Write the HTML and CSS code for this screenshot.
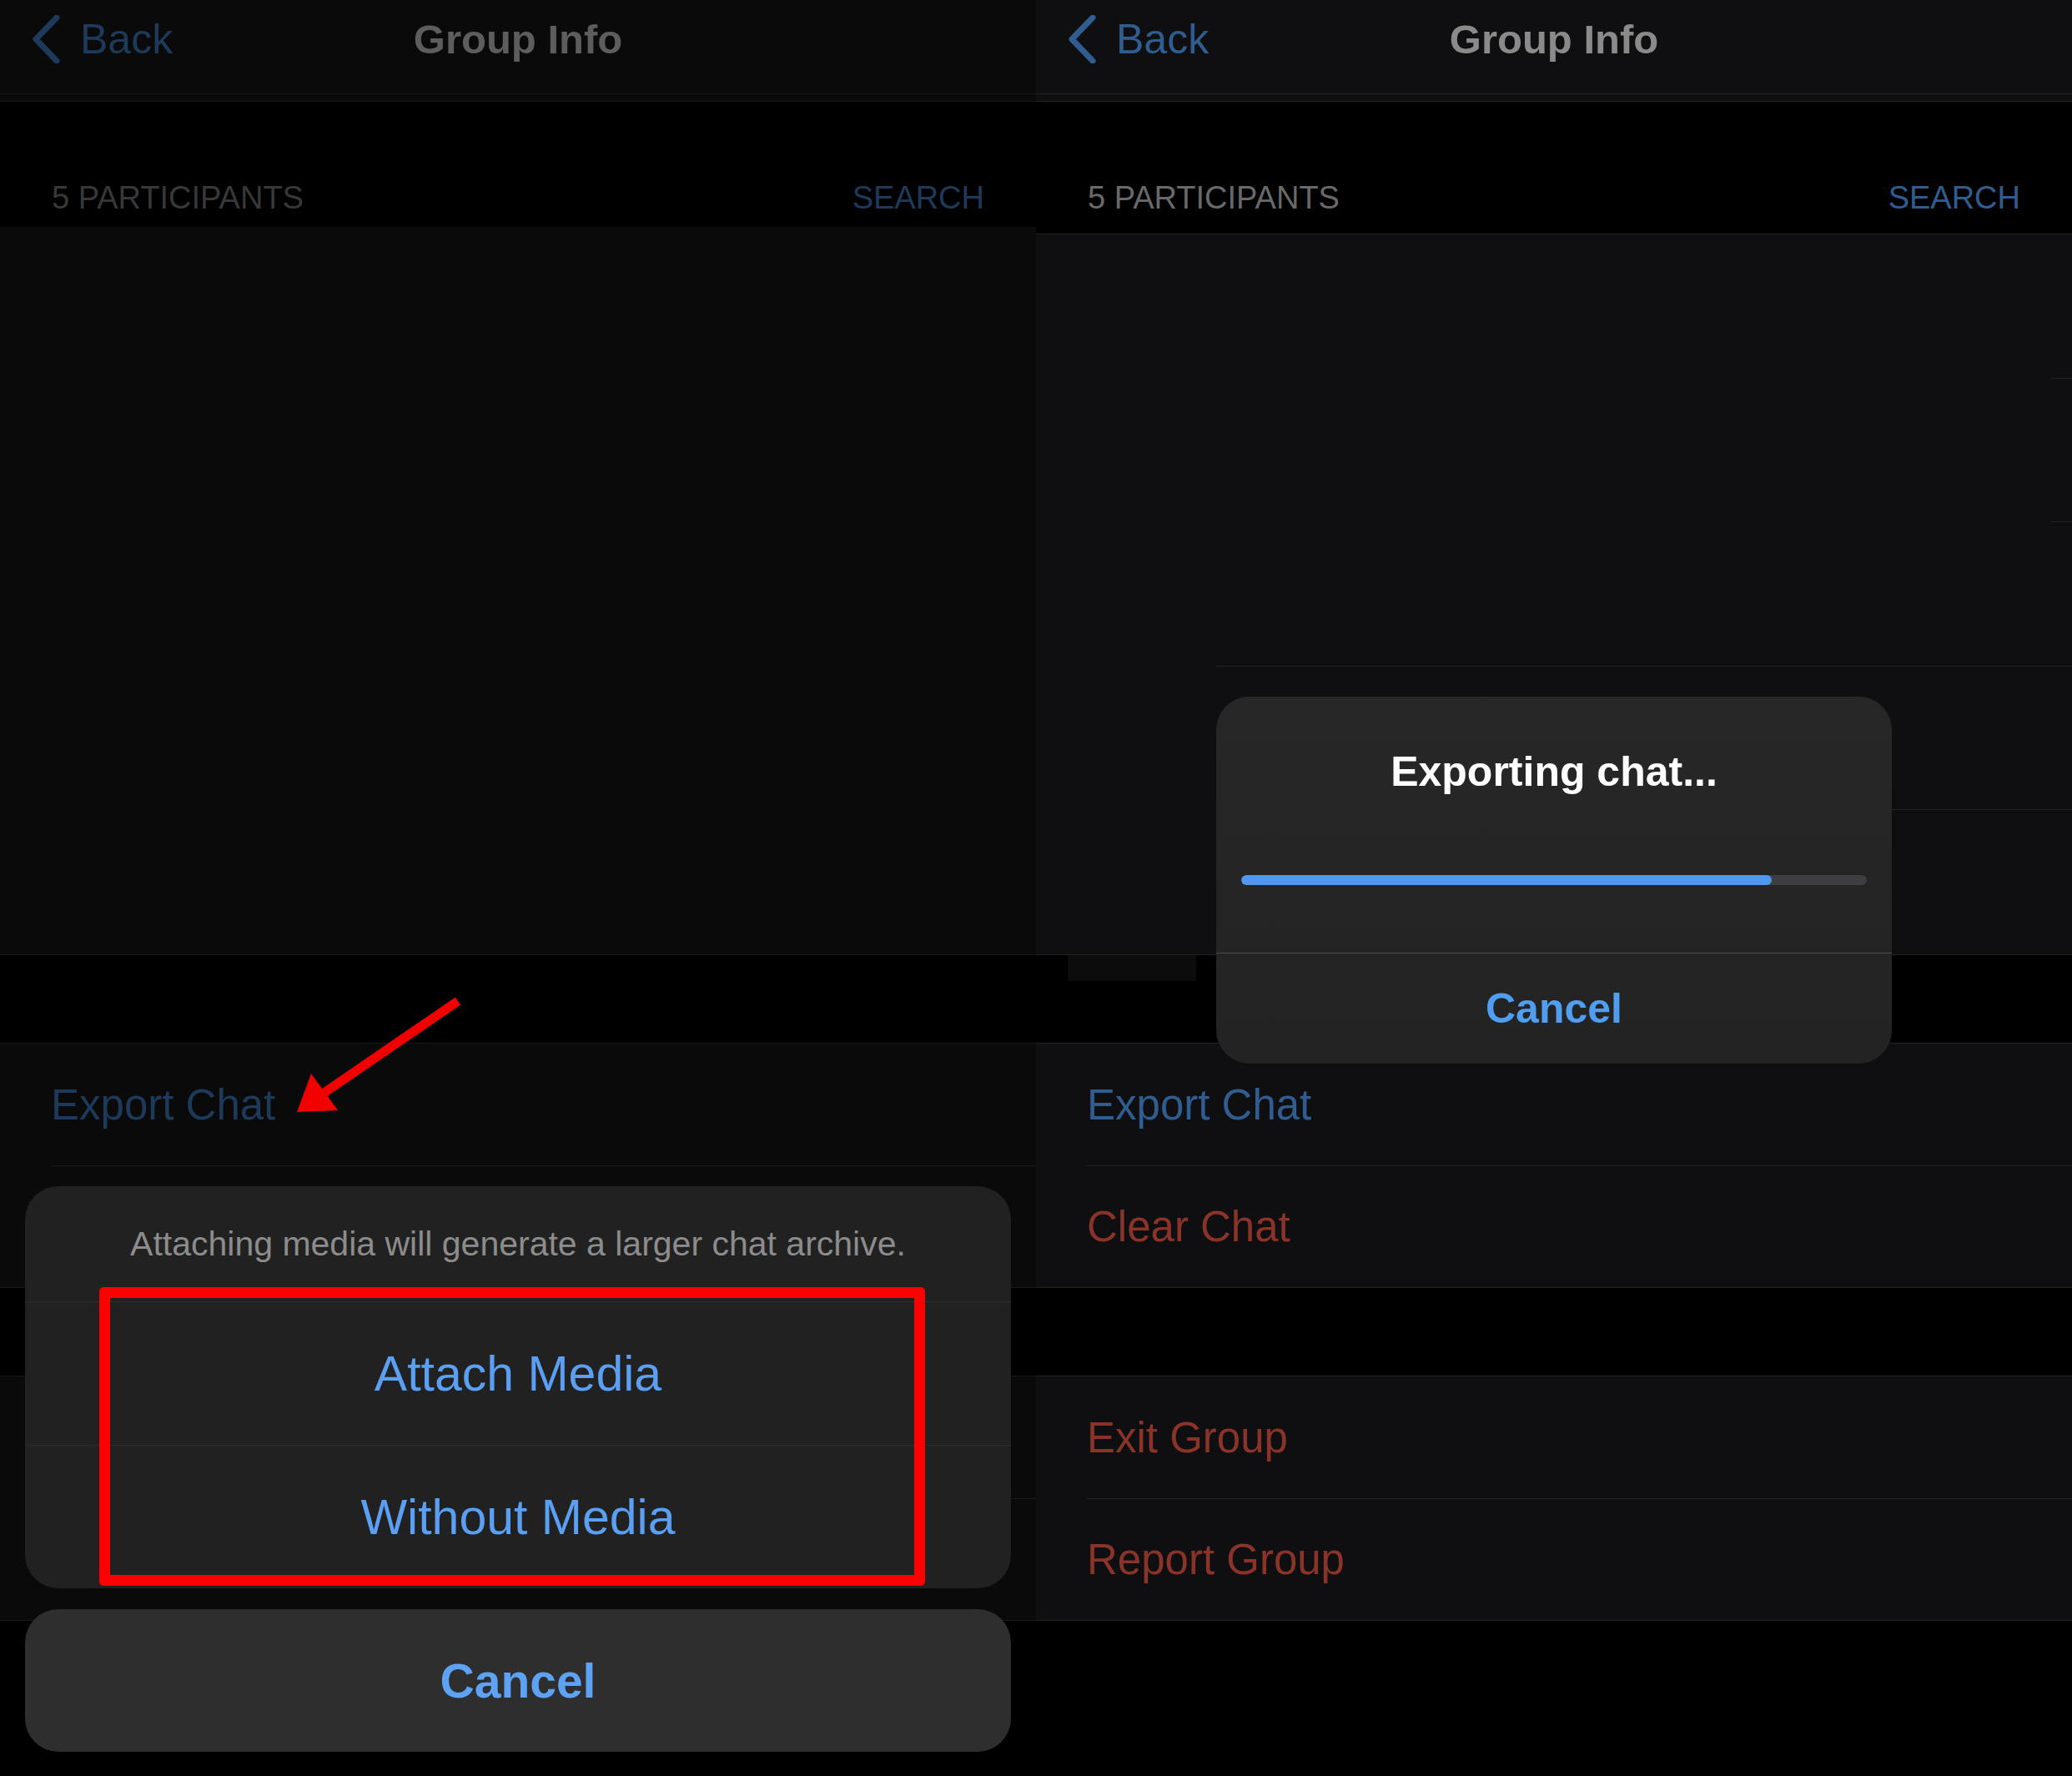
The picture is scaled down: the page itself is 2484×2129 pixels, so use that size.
FILE: index.html
```html
<!DOCTYPE html>
<html lang="en">
<head>
<meta charset="utf-8">
<title>Group Info – Export Chat</title>
<link rel="stylesheet" href="styles.css">
</head>
<body>
<div class="screens">

  <section class="panel panel-dim">
    <header class="nav">
      <div class="nav-left">
        <svg class="chev" width="34" height="58" viewBox="0 0 34 58"><path d="M30 3 L5 29 L30 55"/></svg>
        <span class="back">Back</span>
      </div>
      <div class="nav-title">Group Info</div>
      <div class="nav-right"></div>
    </header>
    <div class="nav-strip"></div>
    <div class="sec-header">
      <span class="count">5 PARTICIPANTS</span>
      <span class="search">SEARCH</span>
    </div>
    <div class="participants">
      <div class="prow"></div>
      <div class="prow"></div>
      <div class="prow"></div>
      <div class="prow"></div>
      <div class="prow"></div>
    </div>
    <div class="gap"></div>
    <div class="group">
      <div class="row row-blue">Export Chat</div>
      <div class="row"></div>
    </div>
    <div class="gap gap-2"></div>
    <div class="group">
      <div class="row"></div>
      <div class="row"></div>
    </div>

    <svg class="arrow" width="230" height="170" viewBox="0 0 230 170">
      <line x1="207" y1="22" x2="45" y2="133"/>
      <polygon points="14,155 31,109 63,153"/>
    </svg>

    <div class="sheet">
      <div class="sheet-group">
        <div class="sheet-msg">Attaching media will generate a larger chat archive.</div>
        <div class="sheet-btn">Attach Media</div>
        <div class="sheet-btn">Without Media</div>
      </div>
      <div class="sheet-cancel">Cancel</div>
    </div>
    <div class="highlight"></div>
  </section>

  <section class="panel panel-alert">
    <header class="nav">
      <div class="nav-left">
        <svg class="chev" width="34" height="58" viewBox="0 0 34 58"><path d="M30 3 L5 29 L30 55"/></svg>
        <span class="back">Back</span>
      </div>
      <div class="nav-title">Group Info</div>
      <div class="nav-right"></div>
    </header>
    <div class="nav-strip"></div>
    <div class="sec-header">
      <span class="count">5 PARTICIPANTS</span>
      <span class="search">SEARCH</span>
    </div>
    <div class="participants">
      <div class="prow sep-edge"></div>
      <div class="prow sep-edge"></div>
      <div class="prow sep-wide"></div>
      <div class="prow sep-wide"></div>
      <div class="prow"></div>
    </div>
    <div class="gap"><div class="redact"></div></div>
    <div class="group">
      <div class="row row-blue">Export Chat</div>
      <div class="row row-red">Clear Chat</div>
    </div>
    <div class="gap gap-2"></div>
    <div class="group">
      <div class="row row-red">Exit Group</div>
      <div class="row row-red">Report Group</div>
    </div>

    <div class="alert">
      <div class="alert-body">
        <div class="alert-title">Exporting chat...</div>
        <div class="progress"><div class="progress-fill" style="width:84.8%"></div></div>
      </div>
      <div class="alert-btn">Cancel</div>
    </div>
  </section>

</div>
</body>
</html>
```

FILE: styles.css
```css
* { box-sizing: border-box; }

html, body {
  margin: 0;
  padding: 0;
  background: #000;
}

body {
  font-family: "Liberation Sans", Arial, sans-serif;
  width: 2484px;
  height: 2129px;
  overflow: hidden;
}

.screens {
  display: flex;
  width: 2484px;
  height: 2129px;
}

.panel {
  position: relative;
  width: 1242px;
  height: 2129px;
  flex: none;
  display: flex;
  flex-direction: column;
  background: #000;
  overflow: hidden;
}

/* ---------- colour themes ---------- */
.panel-dim {
  --bar: #0a0a0a;
  --line: #181818;
  --blue: #1e3a5a;
  --title: #5d5d5d;
  --label: #383838;
  --cell: #0a0a0a;
  --red: #4a1c17;
}

.panel-alert {
  --bar: #0f0f11;
  --line: #232325;
  --blue: #2f5d8f;
  --title: #8a8a8a;
  --label: #696969;
  --cell: #0f0f11;
  --red: #8a3328;
}

/* ---------- nav bar ---------- */
.nav {
  height: 113px;
  background: var(--bar);
  border-bottom: 1px solid var(--line);
  display: grid;
  grid-template-columns: 1fr auto 1fr;
  align-items: center;
  padding-bottom: 18px;
}

.nav-left {
  display: flex;
  align-items: center;
  padding-left: 38px;
  gap: 24px;
}

.chev {
  display: block;
}

.chev path {
  fill: none;
  stroke: var(--blue);
  stroke-width: 7;
  stroke-linecap: round;
  stroke-linejoin: round;
}

.back {
  font-size: 50px;
  line-height: 58px;
  color: var(--blue);
}

.nav-title {
  font-size: 49px;
  font-weight: 700;
  line-height: 58px;
  color: var(--title);
}

.nav-strip {
  height: 9px;
  background: var(--bar);
  border-bottom: 1px solid var(--line);
}

/* ---------- participants header ---------- */
.sec-header {
  height: 150px;
  padding: 96px 62px 0;
  display: flex;
  justify-content: space-between;
  align-items: flex-start;
  font-size: 38px;
  line-height: 38px;
}

.panel-alert .sec-header {
  height: 159px;
  border-bottom: 1px solid var(--line);
}

.count { color: var(--label); }
.search { color: var(--blue); }

/* ---------- participants list ---------- */
.participants {
  height: 873px;
  background: var(--cell);
  border-bottom: 1px solid var(--line);
  display: flex;
  flex-direction: column;
}

.panel-alert .participants {
  height: 864px;
}

.prow {
  flex: 1;
  position: relative;
}

.prow.sep-edge::after,
.prow.sep-wide::after {
  content: "";
  position: absolute;
  right: 0;
  bottom: 0;
  height: 1px;
  background: var(--line);
}

.prow.sep-edge::after { left: 1217px; }
.prow.sep-wide::after { left: 216px; }

/* ---------- grouped rows ---------- */
.gap {
  height: 106px;
  border-bottom: 1px solid var(--line);
}

.gap-2 {
  height: 106px;
}

.redact {
  margin-left: 38px;
  width: 154px;
  height: 31px;
  background: #0c0c0d;
}

.group {
  background: var(--cell);
  border-bottom: 1px solid var(--line);
}

.row {
  height: 146px;
  display: flex;
  align-items: center;
  padding-left: 61px;
  font-size: 51px;
  position: relative;
}

.row + .row::before {
  content: "";
  position: absolute;
  left: 61px;
  right: 0;
  top: 0;
  height: 1px;
  background: var(--line);
}

.row-blue { color: var(--blue); }
.row-red { color: var(--red); }

/* ---------- annotation arrow ---------- */
.arrow {
  position: absolute;
  left: 342px;
  top: 1178px;
}

.arrow line {
  stroke: #f20000;
  stroke-width: 11;
}

.arrow polygon {
  fill: #f20000;
}

/* ---------- action sheet ---------- */
.sheet {
  position: absolute;
  left: 30px;
  right: 30px;
  top: 1422px;
  display: flex;
  flex-direction: column;
  gap: 25px;
}

.sheet-group {
  background: #212121;
  border-radius: 40px;
  overflow: hidden;
}

.sheet-msg {
  height: 138px;
  display: flex;
  align-items: center;
  justify-content: center;
  font-size: 41px;
  color: #8c8c8c;
}

.sheet-btn {
  height: 172px;
  border-top: 1px solid #2e2e2e;
  display: flex;
  align-items: center;
  justify-content: center;
  font-size: 59px;
  color: #5a9ff2;
}

.sheet-cancel {
  height: 171px;
  background: #2e2e2e;
  border-radius: 40px;
  display: flex;
  align-items: center;
  justify-content: center;
  font-size: 57px;
  font-weight: 700;
  color: #5ea2f3;
}

.highlight {
  position: absolute;
  left: 119px;
  top: 1543px;
  width: 990px;
  height: 358px;
  border: 13px solid #ff0000;
  border-radius: 5px;
}

/* ---------- alert ---------- */
.alert {
  position: absolute;
  left: 216px;
  top: 835px;
  width: 810px;
  height: 440px;
  border-radius: 40px;
  background: linear-gradient(180deg, #272727 0%, #232323 100%);
  overflow: hidden;
}

.alert-body {
  height: 308px;
  padding: 65px 30px 0;
  border-bottom: 1px solid #4c4c4c;
}

.alert-title {
  font-size: 50px;
  font-weight: 700;
  line-height: 51px;
  color: #ffffff;
  text-align: center;
}

.progress {
  margin-top: 98px;
  height: 12px;
  border-radius: 6px;
  background: #3e3e42;
  overflow: hidden;
}

.progress-fill {
  height: 100%;
  border-radius: 6px;
  background: #4f97ef;
}

.alert-btn {
  height: 131px;
  display: flex;
  align-items: center;
  justify-content: center;
  font-size: 50px;
  font-weight: 700;
  color: #4f9ef0;
}
```
